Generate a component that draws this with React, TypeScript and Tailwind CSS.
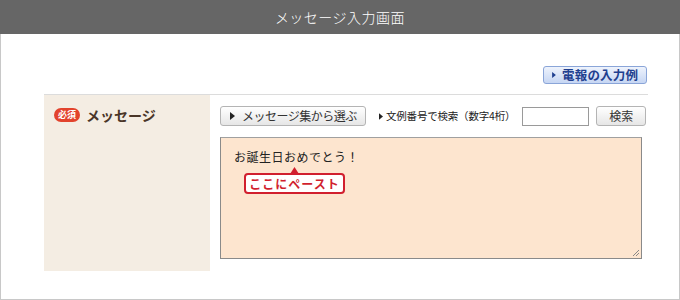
import React from "react";

const Tri = ({ className = "" }: { className?: string }) => (
  <svg width="5" height="8" viewBox="0 0 5 8" className={className}>
    <path d="M0 0 L5 4 L0 8 Z" fill="currentColor" />
  </svg>
);

export default function App() {
  return (
    <div
      className="w-[680px] h-[300px] flex flex-col bg-white"
      style={{ fontFamily: '"Noto Sans CJK JP", "Noto Sans", sans-serif' }}
    >
      <div className="h-[34px] shrink-0 bg-[#666666] flex items-center justify-center text-white text-[14px] font-light tracking-[0.5px]">
        メッセージ入力画面
      </div>
      <div className="flex-1 border-x border-b border-[#c8c8c8] pl-[43px] pr-[31px] pt-[32px] flex flex-col">
        <div className="flex justify-end pr-[1px]">
          <button className="h-[18px] w-[104px] shrink-0 whitespace-nowrap flex items-center gap-[6px] pl-[8px] rounded-[3px] border border-[#8aa5d8] bg-gradient-to-b from-[#eef3fc] to-[#c6d6f3] text-[#1f3f8f] text-[12.5px] font-bold leading-none tracking-[0.2px]">
            <Tri className="text-[#1f3f8f] w-[4px] h-[6px]" />
            電報の入力例
          </button>
        </div>
        <div className="mt-[10px] border-t border-[#dcdcdc] flex">
          <div className="w-[166px] shrink-0 h-[176px] bg-[#f4ede3] pl-[10px] pt-[12px] flex items-start gap-[6px]">
            <span className="mt-[1px] h-[14px] px-[4px] rounded-full bg-[#e2432d] text-white text-[9px] font-bold leading-[14px]">
              必須
            </span>
            <span className="text-[14px] font-bold text-[#4a3628] leading-[16px]">メッセージ</span>
          </div>
          <div className="flex-1 pl-[10px] pt-[11px] pr-[6px]">
            <div className="flex items-center h-[20px]">
              <button className="h-[20px] w-[146px] shrink-0 whitespace-nowrap flex items-center gap-[7px] pl-[9px] rounded-[3px] border border-[#b4b4b4] bg-gradient-to-b from-white to-[#e6e6e6] text-[#333] text-[12px] leading-none tracking-[-0.5px]">
                <Tri className="text-[#222]" />
                メッセージ集から選ぶ
              </button>
              <span className="ml-[13px] shrink-0 whitespace-nowrap flex items-center gap-[3px] text-[10.5px] text-[#222] tracking-[-0.2px]">
                <Tri className="text-[#222] w-[4px] h-[7px]" />
                文例番号で検索（数字4桁）
              </span>
              <input className="ml-[7px] shrink-0 w-[67px] h-[19px] border border-[#9a9a9a] bg-white" />
              <button className="ml-[7px] shrink-0 w-[50px] h-[20px] rounded-[3px] border border-[#b4b4b4] bg-gradient-to-b from-white to-[#e6e6e6] text-[#333] text-[12px] leading-none">
                検索
              </button>
            </div>
            <div className="relative mt-[11px] h-[122px] w-[422px] border border-[#8a8a8a] border-t-[#a0a0a0] bg-[#fde5cf] pl-[13px] pt-[11px]">
              <div className="text-[12px] text-[#222] leading-[16px] tracking-[0.5px]">お誕生日おめでとう！</div>
              <div className="absolute left-[23px] top-[35px] w-[101px] h-[21px] rounded-[4px] border-2 border-[#d11f2e] bg-white flex items-center justify-center text-[#d11f2e] text-[12px] font-bold tracking-[1px] whitespace-nowrap">
                ここにペースト
              </div>
              <svg className="absolute left-[69px] top-[29px]" width="9" height="7" viewBox="0 0 9 7">
                <path d="M0 7 L4.5 0 L9 7 Z" fill="#d11f2e" />
              </svg>
              <svg className="absolute right-[1px] bottom-[1px]" width="9" height="9" viewBox="0 0 9 9">
                <path d="M8 2 L2 8 M8 5 L5 8" stroke="#888" strokeWidth="1" />
              </svg>
            </div>
          </div>
        </div>
      </div>
    </div>
  );
}
